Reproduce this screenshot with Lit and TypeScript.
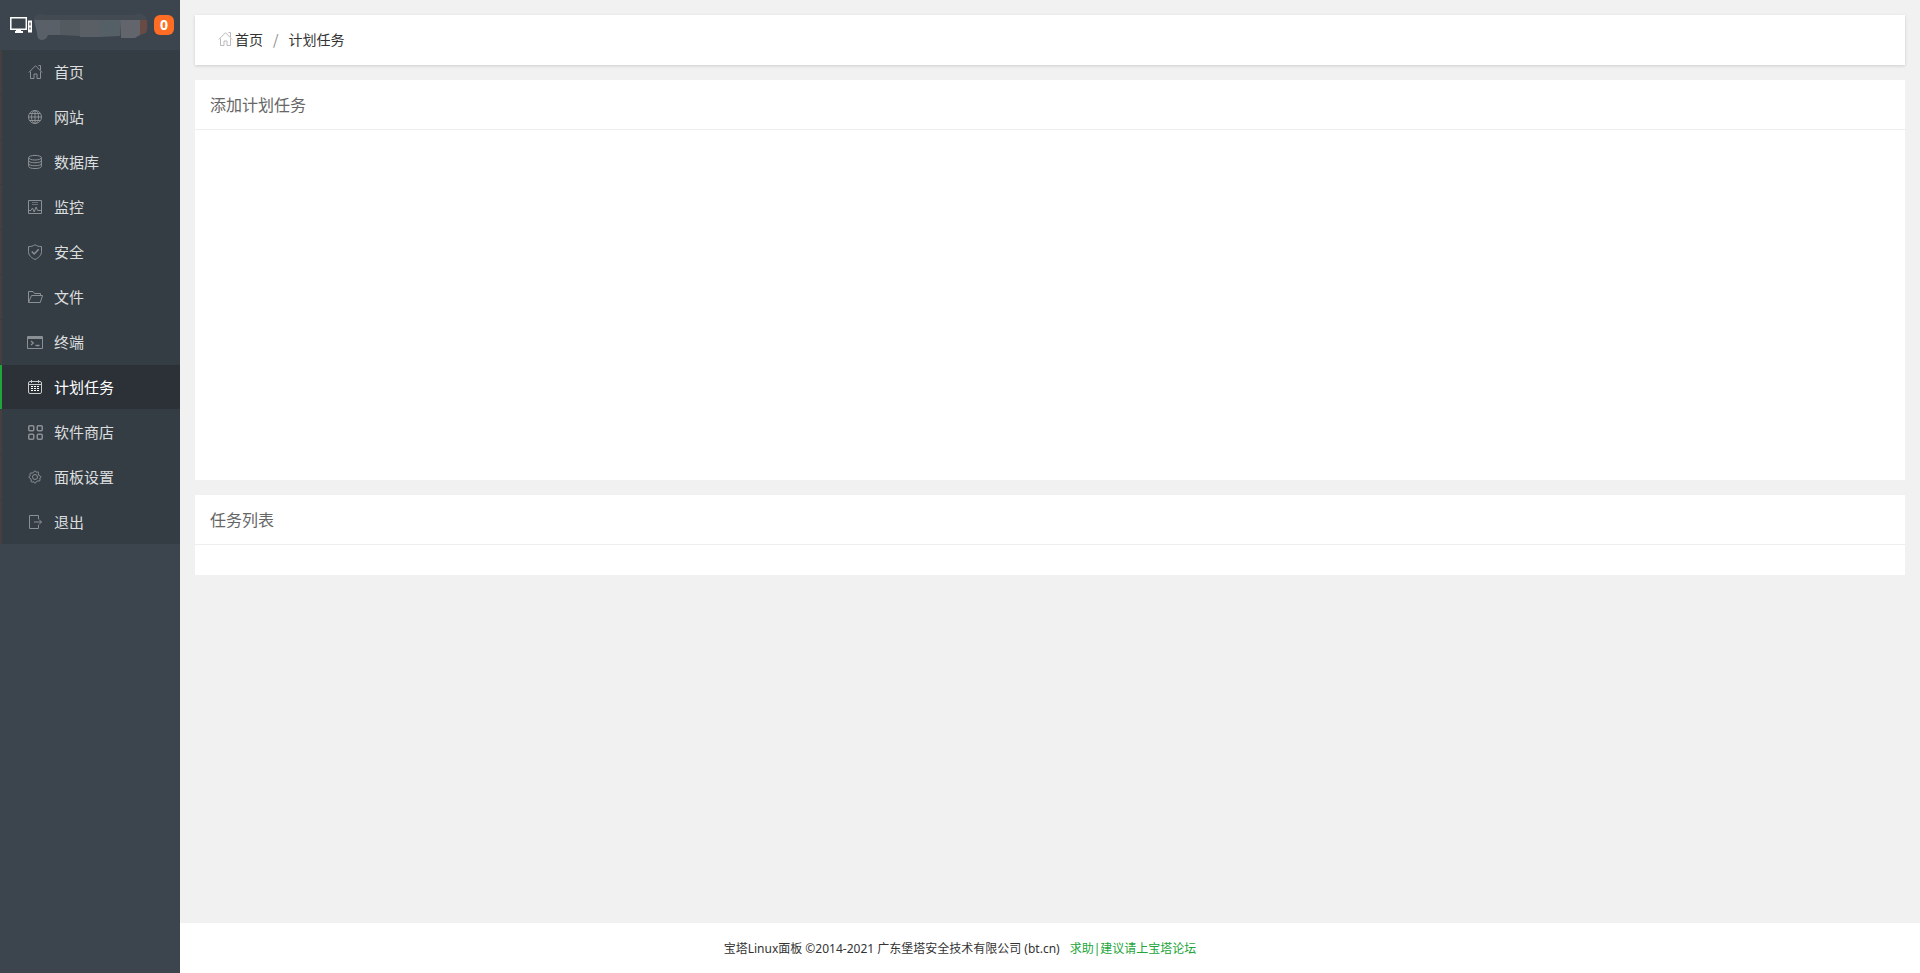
import { LitElement, html, svg, css } from "lit";
import { customElement, state } from "lit/decorators.js";

const house = svg`<path d="M.8 8.500 7.500 1.700 14.200 8.500M2.500 7.500v7h3.500v-4.500h3v4.500h3.500v-7M10.500 1.500h2v4.500"/>`;

const icons: Record<string, unknown> = {
  home: house,
  site: svg`<circle cx="7" cy="8" r="6.500"/><ellipse cx="7" cy="8" rx="3.500" ry="6.500"/><path d="M7 1.500v13M.5 8h13M1.500 4.500h11M1.500 11.500h11"/>`,
  database: svg`<ellipse cx="7" cy="3.700" rx="6.400" ry="2.300"/><path d="M.6 3.700v8.600c0 3 12.800 3 12.800 0V3.700M.6 6.500c0 3 12.800 3 12.800 0M.6 9.500c0 3 12.800 3 12.800 0"/>`,
  monitor: svg`<path d="M.5 1.500h13v13H.5z"/><path d="M4 3.500h6M4 5.500h6" opacity=".6"/><path d="M1 11.500h2L4.500 9l1.700 4 1.800-5 1.600 3.500H13"/>`,
  security: svg`<path d="M7 .7c2 1.400 4 1.900 6.500 1.900v5c0 3.600-2.700 6-6.500 7.900C3.200 13.600.5 11.200.5 7.600v-5C3 2.600 5 2.100 7 .7z"/><path stroke-width="1.500" d="m3.800 7.500 2.400 2.500 4.500-4.700"/>`,
  files: svg`<path d="M.5 13.500v-11h4.500l1.500 2h6v2M.5 13.500 3.500 6.500h11L12.300 13.500z"/>`,
  terminal: svg`<path d="M-.5 2.500h15v12h-15z"/><path stroke-width="2" d="M0 4h14.500"/><path stroke-width="1.300" d="m3 7 2.300 2L3 11M7.500 11.500h4"/>`,
  cron: svg`<rect x=".5" y="2.500" width="13" height="12" rx="1.500"/><path d="M.5 5.500h13M3.500 1v3M10.500 1v3"/><path stroke="#fff" stroke-dasharray="2 1" d="M3 7.500h8M3 9.500h8M3 11.500h8"/>`,
  store: svg`<g stroke-width="1.500"><rect x=".75" y="1.750" width="5" height="5" rx="1"/><rect x="9.250" y="1.750" width="5" height="5" rx="1"/><rect x=".75" y="10.250" width="5" height="5" rx="1"/><rect x="9.250" y="10.250" width="5" height="5" rx="1"/></g>`,
  settings: svg`<circle cx="7" cy="8" r="2.500"/><path d="M5.700 3.300Q7 .2 8.300 3.300Q11.400 2 10.300 4.800L10.700 6.200Q14.800 8 11.700 9.300Q13 12.700 9.800 11.900L8.300 12.700Q7 15.800 5.700 12.700Q2.300 14 3.300 11L2.300 9.300Q-.8 8 2.300 6.700Q1 3.300 4.200 4.100z"/>`,
  exit: svg`<path d="M10.500 5V1.500H1.500v13h9V11M6 8h7.500M11 5.500 13.500 8 11 10.500"/>`,
};

const menu = [
  { id: "home", label: "首页" },
  { id: "site", label: "网站" },
  { id: "database", label: "数据库" },
  { id: "monitor", label: "监控" },
  { id: "security", label: "安全" },
  { id: "files", label: "文件" },
  { id: "terminal", label: "终端" },
  { id: "cron", label: "计划任务" },
  { id: "store", label: "软件商店" },
  { id: "settings", label: "面板设置" },
  { id: "exit", label: "退出" },
];

@customElement("panel-sidebar")
export class PanelSidebar extends LitElement {
  @state() private current = "cron";

  static styles = css`
    :host {
      display: block;
      background: #3c444d;
    }
    .server {
      display: flex;
      align-items: center;
      justify-content: space-between;
      box-sizing: border-box;
      height: 50px;
      padding: 0 6px 0 10px;
    }
    .host {
      display: block;
      width: 138px;
      height: 30px;
    }
    .count {
      min-width: 20px;
      height: 20px;
      padding: 0;
      border: 0;
      border-radius: 6px;
      background: #ff6c23;
      color: #fff;
      font: bold 14px/20px "Open Sans", sans-serif;
      text-align: center;
    }
    .menu {
      margin: 0;
      padding: 0;
      list-style: none;
      background: #353d44;
    }
    .link {
      display: flex;
      align-items: center;
      gap: 10px;
      box-sizing: border-box;
      height: 44px;
      padding-left: 26px;
      border-left: 2px solid #45403f;
      color: #dcdedf;
      font-size: 15px;
      line-height: 20px;
      text-decoration: none;
    }
    .item {
      padding-bottom: 1px;
    }
    .item:last-child {
      padding-bottom: 0;
    }
    .link:hover,
    .link.on {
      background: #2c3138;
      color: #fff;
    }
    .link.on {
      border-color: #20a53a;
    }
    .icon {
      width: 16px;
      height: 16px;
      overflow: visible;
      fill: none;
      stroke: #8b9094;
    }
    .on .icon {
      stroke: #c8cacc;
    }
  `;

  render() {
    return html`
      <div class="server">
        <svg class="host" viewBox="10 10 138 30" aria-hidden="true">
          <path fill="#434a52" d="M34 20v-3q5-5 10-2h90q7-4 12 2v3z" />
          <path fill="#596068" d="M34 20h26v15H48q-1 5-7 5-4-1-4-7z" />
          <path fill="#535b61" d="M60 20h20v16l-20-1z" />
          <path fill="#595f65" d="M80 20h20v17H80z" />
          <path fill="#555f66" d="M100 20h20v16l-20 1z" />
          <path fill="#62656c" d="M120 20h20v15l-5 3h-14z" />
          <path fill="#684b45" d="M140 20h7q1 8-1 13l-6 2z" />
          <path fill="none" stroke="#fff" stroke-width="1.500" d="M10.800 17.800h15.500v11.500H10.800z" />
          <path fill="#fff" d="M16 30h5v1h2v2h-8v-2h1z" />
          <path fill="#fff" fill-rule="evenodd" d="M28 20.500h4v12h-4zm1.400 2v3h1.200v-3zm0 5v2h1.200v-2z" />
        </svg>
        <button class="count">0</button>
      </div>
      <nav>
        <ul class="menu">
          ${menu.map(
            (m) => html`<li class="item">
              <a
                class="link ${m.id === this.current ? "on" : ""}"
                href="#${m.id}"
                @click=${() => (this.current = m.id)}
              >
                <svg class="icon" viewBox="0 0 16 16" aria-hidden="true">${icons[m.id]}</svg>
                <span>${m.label}</span>
              </a>
            </li>`
          )}
        </ul>
      </nav>
    `;
  }
}

@customElement("app-root")
export class AppRoot extends LitElement {
  static styles = css`
    :host {
      display: grid;
      grid-template: 1fr auto / 180px 1fr;
      min-height: 100vh;
      background: #f1f1f1;
      color: #333;
      font-family: "Noto Sans", "Noto Sans CJK SC", sans-serif;
      font-size: 12px;
    }
    .side {
      grid-area: 1 / 1 / 3 / 2;
      z-index: 1;
      font-family: "Noto Sans CJK SC", sans-serif;
    }
    .main {
      grid-area: 1 / 2;
      display: flex;
      flex-direction: column;
      gap: 15px;
      padding: 15px;
      font-family: "Noto Sans CJK SC", sans-serif;
    }
    .crumbs {
      display: flex;
      align-items: center;
      height: 48px;
      padding: 0 23px 2px;
      background: #fff;
      box-shadow: 0 1px 3px rgba(0, 0, 0, 0.15);
      font-size: 14px;
      line-height: 20px;
    }
    .home {
      display: flex;
      align-items: center;
      gap: 1px;
      color: #333;
      text-decoration: none;
    }
    .icon {
      width: 16px;
      height: 16px;
      fill: none;
      stroke: #bbb;
    }
    .slash {
      padding: 0 10px;
      color: #888;
    }
    .card {
      background: #fff;
    }
    .title {
      margin: 0;
      padding: 0 15px;
      border-bottom: 1px solid #eee;
      color: #666;
      font-size: 16px;
      font-weight: 400;
      line-height: 49px;
    }
    .form {
      min-height: 350px;
    }
    .list {
      min-height: 30px;
    }
    .foot {
      grid-area: 2 / 1 / 3 / 3;
      display: flex;
      justify-content: center;
      gap: 10px;
      padding-top: 2px;
      background: #fff;
      line-height: 48px;
    }
    .forum {
      color: #20a53a;
      text-decoration: none;
    }
  `;

  render() {
    return html`
      <panel-sidebar class="side"></panel-sidebar>
      <main class="main">
        <nav class="crumbs">
          <a class="home" href="#home">
            <svg class="icon" viewBox="0 0 16 16" aria-hidden="true">${house}</svg>
            <span>首页</span>
          </a>
          <span class="slash">/</span>
          <span>计划任务</span>
        </nav>
        <section class="card">
          <h3 class="title">添加计划任务</h3>
          <div class="form"></div>
        </section>
        <section class="card">
          <h3 class="title">任务列表</h3>
          <div class="list"></div>
        </section>
      </main>
      <footer class="foot">
        <span>宝塔Linux面板 ©2014-2021 广东堡塔安全技术有限公司 (bt.cn)</span>
        <a class="forum" href="#forum">求助|建议请上宝塔论坛</a>
      </footer>
    `;
  }
}
